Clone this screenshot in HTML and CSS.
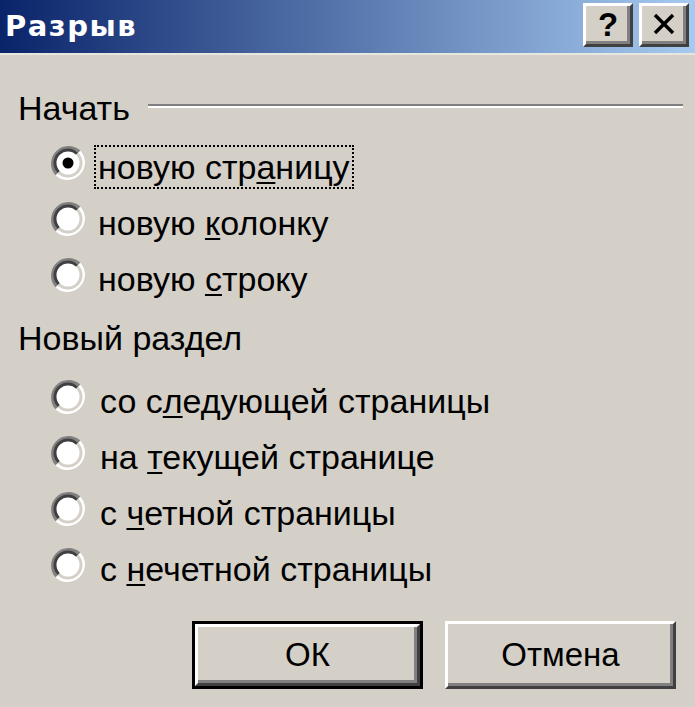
FILE: index.html
```html
<!DOCTYPE html>
<html lang="ru">
<head>
<meta charset="utf-8">
<title>Разрыв</title>
<link rel="stylesheet" href="styles.css">
</head>
<body>
<div class="dialog">
  <div class="titlebar">
    <span class="title">Разрыв</span>
    <div class="tb-buttons">
      <span class="tb-btn">?</span>
      <span class="tb-btn tb-close">
        <svg width="24" height="22" viewBox="0 0 24 22"><path d="M3 2 L21 20 M21 2 L3 20" stroke="#000" stroke-width="3.5" fill="none"/></svg>
      </span>
    </div>
  </div>
  <div class="content">
    <div class="group-label">
      <span>Начать</span>
      <span class="etch"></span>
    </div>
    <div class="radio-list">
      <div class="radio-row">
        <svg class="radio" viewBox="0 0 36 36"><circle cx="18" cy="18" r="15" fill="#fff"/><path d="M6.7 29.3 A16 16 0 0 1 29.3 6.7" stroke="#808080" stroke-width="3" fill="none"/><path d="M8.8 27.2 A13 13 0 0 1 27.2 8.8" stroke="#404040" stroke-width="3" fill="none"/><path d="M29.3 6.7 A16 16 0 0 1 6.7 29.3" stroke="#fff" stroke-width="3" fill="none"/><path d="M27.2 8.8 A13 13 0 0 1 8.8 27.2" stroke="#d4d0c8" stroke-width="3" fill="none"/><circle cx="18" cy="18" r="5.5" fill="#000"/></svg>
        <span class="label focus">новую стр<u>а</u>ницу</span>
      </div>
      <div class="radio-row">
        <svg class="radio" viewBox="0 0 36 36"><circle cx="18" cy="18" r="15" fill="#fff"/><path d="M6.7 29.3 A16 16 0 0 1 29.3 6.7" stroke="#808080" stroke-width="3" fill="none"/><path d="M8.8 27.2 A13 13 0 0 1 27.2 8.8" stroke="#404040" stroke-width="3" fill="none"/><path d="M29.3 6.7 A16 16 0 0 1 6.7 29.3" stroke="#fff" stroke-width="3" fill="none"/><path d="M27.2 8.8 A13 13 0 0 1 8.8 27.2" stroke="#d4d0c8" stroke-width="3" fill="none"/></svg>
        <span class="label">новую <u>к</u>олонку</span>
      </div>
      <div class="radio-row">
        <svg class="radio" viewBox="0 0 36 36"><circle cx="18" cy="18" r="15" fill="#fff"/><path d="M6.7 29.3 A16 16 0 0 1 29.3 6.7" stroke="#808080" stroke-width="3" fill="none"/><path d="M8.8 27.2 A13 13 0 0 1 27.2 8.8" stroke="#404040" stroke-width="3" fill="none"/><path d="M29.3 6.7 A16 16 0 0 1 6.7 29.3" stroke="#fff" stroke-width="3" fill="none"/><path d="M27.2 8.8 A13 13 0 0 1 8.8 27.2" stroke="#d4d0c8" stroke-width="3" fill="none"/></svg>
        <span class="label">новую <u>с</u>троку</span>
      </div>
    </div>
    <div class="group-label second">
      <span>Новый раздел</span>
    </div>
    <div class="radio-list list2">
      <div class="radio-row">
        <svg class="radio" viewBox="0 0 36 36"><circle cx="18" cy="18" r="15" fill="#fff"/><path d="M6.7 29.3 A16 16 0 0 1 29.3 6.7" stroke="#808080" stroke-width="3" fill="none"/><path d="M8.8 27.2 A13 13 0 0 1 27.2 8.8" stroke="#404040" stroke-width="3" fill="none"/><path d="M29.3 6.7 A16 16 0 0 1 6.7 29.3" stroke="#fff" stroke-width="3" fill="none"/><path d="M27.2 8.8 A13 13 0 0 1 8.8 27.2" stroke="#d4d0c8" stroke-width="3" fill="none"/></svg>
        <span class="label">со с<u>л</u>едующей страницы</span>
      </div>
      <div class="radio-row">
        <svg class="radio" viewBox="0 0 36 36"><circle cx="18" cy="18" r="15" fill="#fff"/><path d="M6.7 29.3 A16 16 0 0 1 29.3 6.7" stroke="#808080" stroke-width="3" fill="none"/><path d="M8.8 27.2 A13 13 0 0 1 27.2 8.8" stroke="#404040" stroke-width="3" fill="none"/><path d="M29.3 6.7 A16 16 0 0 1 6.7 29.3" stroke="#fff" stroke-width="3" fill="none"/><path d="M27.2 8.8 A13 13 0 0 1 8.8 27.2" stroke="#d4d0c8" stroke-width="3" fill="none"/></svg>
        <span class="label">на <u>т</u>екущей странице</span>
      </div>
      <div class="radio-row">
        <svg class="radio" viewBox="0 0 36 36"><circle cx="18" cy="18" r="15" fill="#fff"/><path d="M6.7 29.3 A16 16 0 0 1 29.3 6.7" stroke="#808080" stroke-width="3" fill="none"/><path d="M8.8 27.2 A13 13 0 0 1 27.2 8.8" stroke="#404040" stroke-width="3" fill="none"/><path d="M29.3 6.7 A16 16 0 0 1 6.7 29.3" stroke="#fff" stroke-width="3" fill="none"/><path d="M27.2 8.8 A13 13 0 0 1 8.8 27.2" stroke="#d4d0c8" stroke-width="3" fill="none"/></svg>
        <span class="label">с <u>ч</u>етной страницы</span>
      </div>
      <div class="radio-row">
        <svg class="radio" viewBox="0 0 36 36"><circle cx="18" cy="18" r="15" fill="#fff"/><path d="M6.7 29.3 A16 16 0 0 1 29.3 6.7" stroke="#808080" stroke-width="3" fill="none"/><path d="M8.8 27.2 A13 13 0 0 1 27.2 8.8" stroke="#404040" stroke-width="3" fill="none"/><path d="M29.3 6.7 A16 16 0 0 1 6.7 29.3" stroke="#fff" stroke-width="3" fill="none"/><path d="M27.2 8.8 A13 13 0 0 1 8.8 27.2" stroke="#d4d0c8" stroke-width="3" fill="none"/></svg>
        <span class="label">с <u>н</u>ечетной страницы</span>
      </div>
    </div>
    <div class="buttons">
      <div class="btn default"><span class="btn-face">ОК</span></div>
      <div class="btn"><span class="btn-face">Отмена</span></div>
    </div>
  </div>
</div>
</body>
</html>
```
FILE: styles.css
```css
html, body {
  margin: 0;
  padding: 0;
  background: #d4d0c8;
}
.dialog {
  width: 695px;
  height: 707px;
  background: #d4d0c8;
  font-family: "Liberation Sans", Arial, sans-serif;
  color: #000;
  overflow: hidden;
}
.titlebar {
  height: 55px;
  background: linear-gradient(to right, #0a246a 0%, #a6caf0 100%);
  display: flex;
  align-items: center;
  justify-content: space-between;
  padding: 0 6px 0 5px;
  box-sizing: border-box;
  border-bottom: 2px solid #e8e6e0;
}
.title {
  color: #fff;
  font-family: "DejaVu Sans", Verdana, sans-serif;
  font-weight: bold;
  font-size: 29px;
  letter-spacing: 1.5px;
  margin-top: -2px;
}
.tb-buttons {
  display: flex;
  gap: 6px;
  margin-top: -3px;
}
.tb-btn {
  width: 50px;
  height: 44px;
  box-sizing: border-box;
  background: #d4d0c8;
  border-top: 3px solid #fff;
  border-left: 3px solid #fff;
  border-right: 3px solid #404040;
  border-bottom: 3px solid #404040;
  box-shadow: inset -3px -3px 0 #808080;
  display: flex;
  align-items: center;
  justify-content: center;
  font-weight: bold;
  font-size: 33px;
  line-height: 1;
  padding-bottom: 2px;
}
.content {
  padding: 25px 12px 0 18px;
  font-size: 34px;
}
.group-label {
  height: 56px;
  display: flex;
  align-items: center;
  gap: 18px;
}
.group-label.second {
  margin-top: 3px;
}
.etch {
  flex: 1;
  height: 0;
  border-top: 2px solid #808080;
  border-bottom: 2px solid #fff;
  margin-top: -4px;
}
.radio-list {
  margin-top: 3px;
  padding-left: 32px;
}
.radio-list.list2 {
  margin-top: 7px;
}
.radio-row {
  height: 56px;
  display: flex;
  align-items: center;
  gap: 12px;
}
.list2 .radio-row {
  gap: 14px;
}
.radio {
  width: 36px;
  height: 36px;
  flex: none;
  margin-top: -9px;
}
.label {
  white-space: nowrap;
  line-height: 36px;
  border: 2px solid transparent;
  padding: 2px;
  margin-left: -4px;
}
.label.focus {
  border: 2px dotted #000;
}
u {
  text-decoration-thickness: 2px;
  text-underline-offset: 3px;
}
.buttons {
  display: flex;
  justify-content: flex-end;
  gap: 22px;
  margin-top: 24px;
  padding-right: 7px;
}
.btn {
  width: 231px;
  height: 68px;
  box-sizing: border-box;
  display: flex;
}
.btn-face {
  flex: 1;
  display: flex;
  align-items: center;
  justify-content: center;
  background: #d4d0c8;
  border-top: 3px solid #fff;
  border-left: 3px solid #fff;
  border-right: 3px solid #404040;
  border-bottom: 3px solid #404040;
  box-shadow: inset -3px -3px 0 #808080;
  font-size: 33px;
}
.btn.default {
  border: 3px solid #000;
}
```
